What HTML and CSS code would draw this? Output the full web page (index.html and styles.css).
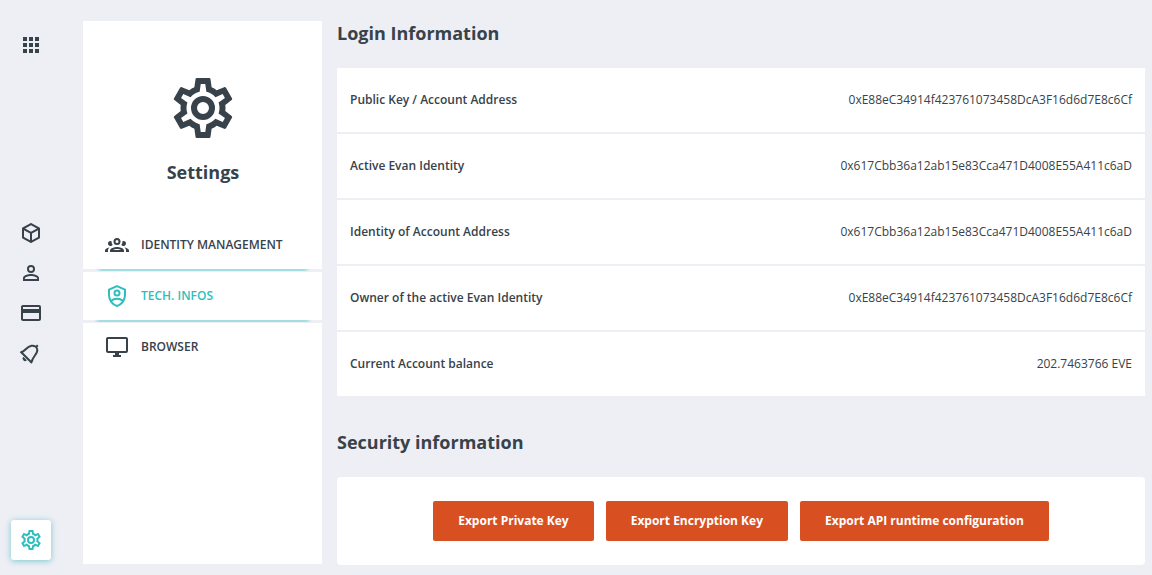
FILE: index.html
```html
<!DOCTYPE html>
<html lang="en">
<head>
<meta charset="utf-8">
<title>Settings</title>
<link rel="stylesheet" href="styles.css">
</head>
<body>
<svg class="defs" aria-hidden="true">
  <symbol id="cog" viewBox="0 0 24 24"><path d="M12,8A4,4 0 0,1 16,12A4,4 0 0,1 12,16A4,4 0 0,1 8,12A4,4 0 0,1 12,8M12,10A2,2 0 0,0 10,12A2,2 0 0,0 12,14A2,2 0 0,0 14,12A2,2 0 0,0 12,10M10,22C9.75,22 9.54,21.82 9.5,21.58L9.13,18.93C8.5,18.68 7.96,18.34 7.44,17.94L4.95,18.95C4.73,19.03 4.46,18.95 4.34,18.73L2.34,15.27C2.21,15.05 2.27,14.78 2.46,14.63L4.57,12.97L4.5,12L4.57,11L2.46,9.37C2.27,9.22 2.21,8.95 2.34,8.73L4.34,5.27C4.46,5.05 4.73,4.96 4.95,5.05L7.44,6.05C7.96,5.66 8.5,5.32 9.13,5.07L9.5,2.42C9.54,2.18 9.75,2 10,2H14C14.25,2 14.46,2.18 14.5,2.42L14.87,5.07C15.5,5.32 16.04,5.66 16.56,6.05L19.05,5.05C19.27,4.96 19.54,5.05 19.66,5.27L21.66,8.73C21.79,8.95 21.73,9.22 21.54,9.37L19.43,11L19.5,12L19.43,13L21.54,14.63C21.73,14.78 21.79,15.05 21.66,15.27L19.66,18.73C19.54,18.95 19.27,19.04 19.05,18.95L16.56,17.95C16.04,18.34 15.5,18.68 14.87,18.93L14.5,21.58C14.46,21.82 14.25,22 14,22H10M11.25,4L10.88,6.61C9.68,6.86 8.62,7.5 7.85,8.39L5.44,7.35L4.69,8.65L6.8,10.2C6.4,11.37 6.4,12.64 6.8,13.8L4.68,15.36L5.43,16.66L7.86,15.62C8.63,16.5 9.68,17.14 10.87,17.38L11.24,20H12.76L13.13,17.39C14.32,17.14 15.37,16.5 16.14,15.62L18.57,16.66L19.32,15.36L17.2,13.81C17.6,12.64 17.6,11.37 17.2,10.2L19.31,8.65L18.56,7.35L16.15,8.39C15.38,7.5 14.32,6.86 13.12,6.62L12.75,4H11.25Z"/></symbol>
</svg>
<div class="app">
  <nav class="rail">
    <a class="rail-item"><svg class="icon" viewBox="0 0 24 24"><path d="M4,4H8V8H4ZM10,4H14V8H10ZM16,4H20V8H16ZM4,10H8V14H4ZM10,10H14V14H10ZM16,10H20V14H16ZM4,16H8V20H4ZM10,16H14V20H10ZM16,16H20V20H16Z"/></svg></a>
    <div class="rail-group">
      <a class="rail-item"><svg class="icon" viewBox="0 0 24 24"><path d="M21,16.5C21,16.88 20.79,17.21 20.47,17.38L12.57,21.82C12.41,21.94 12.21,22 12,22C11.79,22 11.59,21.94 11.43,21.82L3.53,17.38C3.21,17.21 3,16.88 3,16.5V7.5C3,7.12 3.21,6.79 3.53,6.62L11.43,2.18C11.59,2.06 11.79,2 12,2C12.21,2 12.41,2.06 12.57,2.18L20.47,6.62C20.79,6.79 21,7.12 21,7.5V16.5M12,4.15L6.04,7.5L12,10.85L17.96,7.5L12,4.15M5,15.91L11,19.29V12.58L5,9.21V15.91M19,15.91V9.21L13,12.58V19.29L19,15.91Z"/></svg></a>
      <a class="rail-item"><svg class="icon" viewBox="0 0 24 24"><path d="M12,13C9.33,13 4,14.33 4,17V20H20V17C20,14.33 14.67,13 12,13M12,4A4,4 0 0,0 8,8A4,4 0 0,0 12,12A4,4 0 0,0 16,8A4,4 0 0,0 12,4M12,14.9C14.97,14.9 18.1,16.36 18.1,17V18.1H5.9V17C5.9,16.36 9,14.9 12,14.9M12,5.9A2.1,2.1 0 0,1 14.1,8A2.1,2.1 0 0,1 12,10.1A2.1,2.1 0 0,1 9.9,8A2.1,2.1 0 0,1 12,5.9Z"/></svg></a>
      <a class="rail-item"><svg class="icon" viewBox="0 0 24 24"><path d="M20,8H4V6H20M20,18H4V12H20M20,4H4C2.89,4 2,4.89 2,6V18C2,19.11 2.9,20 4,20H20C21.11,20 22,19.11 22,18V6C22,4.89 21.1,4 20,4Z"/></svg></a>
      <a class="rail-item"><svg class="icon" viewBox="0 0 24 24"><g fill="none" stroke="currentColor" stroke-width="2"><path d="M1.500,10.500L13,22M2.500,11.200C6.500,10 7.500,5.500 12.500,4.800C15.500,4.400 17.900,5.800 18.300,8.800C18.800,12.800 13.600,15.500 12.600,21M16.500,6.500L18.800,4.200"/></g><path d="M4.300,15.800L7.800,19.300A2.300,2.300 0 0,1 4.300,15.800Z"/></svg></a>
    </div>
    <a class="rail-item active"><svg class="icon"><use href="#cog"/></svg></a>
  </nav>
  <aside class="sidebar">
    <svg class="hero"><use href="#cog"/></svg>
    <h1 class="title">Settings</h1>
    <a class="menu-item"><svg class="icon" viewBox="0 0 24 24"><path d="M12,5A3.5,3.5 0 0,0 8.5,8.5A3.5,3.5 0 0,0 12,12A3.5,3.5 0 0,0 15.5,8.5A3.5,3.5 0 0,0 12,5M12,7A1.5,1.5 0 0,1 13.5,8.5A1.5,1.5 0 0,1 12,10A1.5,1.5 0 0,1 10.5,8.5A1.5,1.5 0 0,1 12,7M5.5,8A2.5,2.5 0 0,0 3,10.5C3,11.44 3.53,12.25 4.29,12.68C4.65,12.88 5.06,13 5.5,13C5.94,13 6.35,12.88 6.71,12.68C7.08,12.47 7.39,12.17 7.62,11.81C6.89,10.86 6.5,9.7 6.5,8.5C6.5,8.41 6.5,8.31 6.5,8.22C6.2,8.08 5.86,8 5.5,8M18.5,8C18.14,8 17.8,8.08 17.5,8.22C17.5,8.31 17.5,8.41 17.5,8.5C17.5,9.7 17.11,10.86 16.38,11.81C16.5,12 16.63,12.15 16.78,12.3C16.94,12.45 17.1,12.58 17.29,12.68C17.65,12.88 18.06,13 18.5,13C18.94,13 19.35,12.88 19.71,12.68C20.47,12.25 21,11.44 21,10.5A2.5,2.5 0 0,0 18.5,8M12,14C9.66,14 5,15.17 5,17.5V19H19V17.5C19,15.17 14.34,14 12,14M4.71,14.55C2.78,14.78 0,15.76 0,17.5V19H3V17.07C3,16.06 3.69,15.22 4.71,14.55M19.29,14.55C20.31,15.22 21,16.06 21,17.07V19H24V17.5C24,15.76 21.22,14.78 19.29,14.55M12,16C13.53,16 15.24,16.5 16.23,17H7.77C8.76,16.5 10.47,16 12,16Z"/></svg><span>IDENTITY MANAGEMENT</span></a>
    <a class="menu-item selected"><svg class="icon" viewBox="0 0 24 24"><g fill="none" stroke="currentColor" stroke-width="2"><path d="M12,2.100L20,5.650V11C20,16 16.700,20.700 12,22C7.300,20.700 4,16 4,11V5.650Z"/><circle cx="12" cy="9" r="2.500"/><path d="M6,17C8,15.200 10,14.800 12,14.800C14,14.800 16,15.200 18,17"/></g></svg><span>TECH. INFOS</span></a>
    <a class="menu-item"><svg class="icon" viewBox="0 0 24 24"><path d="M21,16H3V4H21M21,2H3C1.89,2 1,2.89 1,4V16A2,2 0 0,0 3,18H10V20H8V22H16V20H14V18H21A2,2 0 0,0 23,16V4C23,2.89 22.1,2 21,2Z"/></svg><span>BROWSER</span></a>
  </aside>
  <main class="content">
    <h2 class="heading">Login Information</h2>
    <dl class="info">
      <div class="row"><dt>Public Key / Account Address</dt><dd>0xE88eC34914f423761073458DcA3F16d6d7E8c6Cf</dd></div>
      <div class="row"><dt>Active Evan Identity</dt><dd>0x617Cbb36a12ab15e83Cca471D4008E55A411c6aD</dd></div>
      <div class="row"><dt>Identity of Account Address</dt><dd>0x617Cbb36a12ab15e83Cca471D4008E55A411c6aD</dd></div>
      <div class="row"><dt>Owner of the active Evan Identity</dt><dd>0xE88eC34914f423761073458DcA3F16d6d7E8c6Cf</dd></div>
      <div class="row"><dt>Current Account balance</dt><dd>202.7463766 EVE</dd></div>
    </dl>
    <h2 class="heading">Security information</h2>
    <div class="actions">
      <button class="btn">Export Private Key</button>
      <button class="btn">Export Encryption Key</button>
      <button class="btn">Export API runtime configuration</button>
    </div>
  </main>
</div>
</body>
</html>
```
FILE: styles.css
```css
* { box-sizing: border-box; }
body {
  margin: 0;
  height: 575px;
  overflow: hidden;
  background: #eeeff5;
  color: #37424a;
  font: 12px/18px "Open Sans", sans-serif;
}
h1, h2, dl, dd { margin: 0; }
.defs { position: absolute; width: 0; height: 0; }
.app { display: flex; height: 575px; }
.icon { display: block; width: 24px; height: 24px; flex: none; fill: currentColor; }
.rail {
  display: flex;
  flex-direction: column;
  justify-content: space-between;
  width: 83px;
  padding: 25px 0 15px 11px;
}
.rail-item {
  display: flex;
  align-items: center;
  justify-content: center;
  width: 40px;
  height: 40px;
}
.rail-group { margin-top: 1px; }
.rail-item.active {
  border-radius: 3px;
  background: #fff;
  color: #2dbfbd;
  box-shadow: 0 1px 6px rgba(45, 170, 175, .6);
}
.sidebar {
  width: 239px;
  height: 543px;
  margin-top: 21px;
  padding-top: 51px;
  background: #fff;
}
.hero { display: block; width: 72px; height: 72px; margin: 0 auto; fill: currentColor; }
.title { margin-top: 16px; padding-left: 1px; font-size: 18px; line-height: 25px; font-weight: 700; text-align: center; }
.title + .menu-item { margin-top: 36px; }
.menu-item {
  display: flex;
  align-items: center;
  gap: 12px;
  height: 48px;
  padding-left: 22px;
  font-weight: 600;
}
.menu-item + .menu-item { border-top: 3px solid #eeeff5; height: 51px; }
.selected { position: relative; color: #2dbfbd; }
.selected::before,
.selected::after {
  content: "";
  position: absolute;
  left: 13px;
  right: 12px;
  height: 2px;
  background: linear-gradient(90deg, transparent, #a2dde0 6px calc(100% - 6px), transparent);
}
.selected::before { top: -3px; height: 1.5px; }
.selected::after { bottom: -2px; left: 11px; right: 10px; }
.content { width: 808px; margin-left: 15px; padding-top: 21px; }
.heading { font-size: 18px; line-height: 25px; font-weight: 700; }
.info { margin: 22px 0 34px; }
.row {
  display: flex;
  align-items: center;
  justify-content: space-between;
  height: 64px;
  padding: 0 13px;
  background: #fff;
}
.row + .row { margin-top: 2px; }
.row dt { font-weight: 600; }
.actions {
  display: flex;
  align-items: center;
  justify-content: center;
  gap: 12px;
  height: 88px;
  margin-top: 22px;
  border-radius: 4px;
  background: #fff;
}
.btn {
  height: 40px;
  padding: 0 25px 2px;
  border: 0;
  border-radius: 2px;
  background: #d84f22;
  color: #fff;
  font: 700 12px "Open Sans", sans-serif;
}
```
